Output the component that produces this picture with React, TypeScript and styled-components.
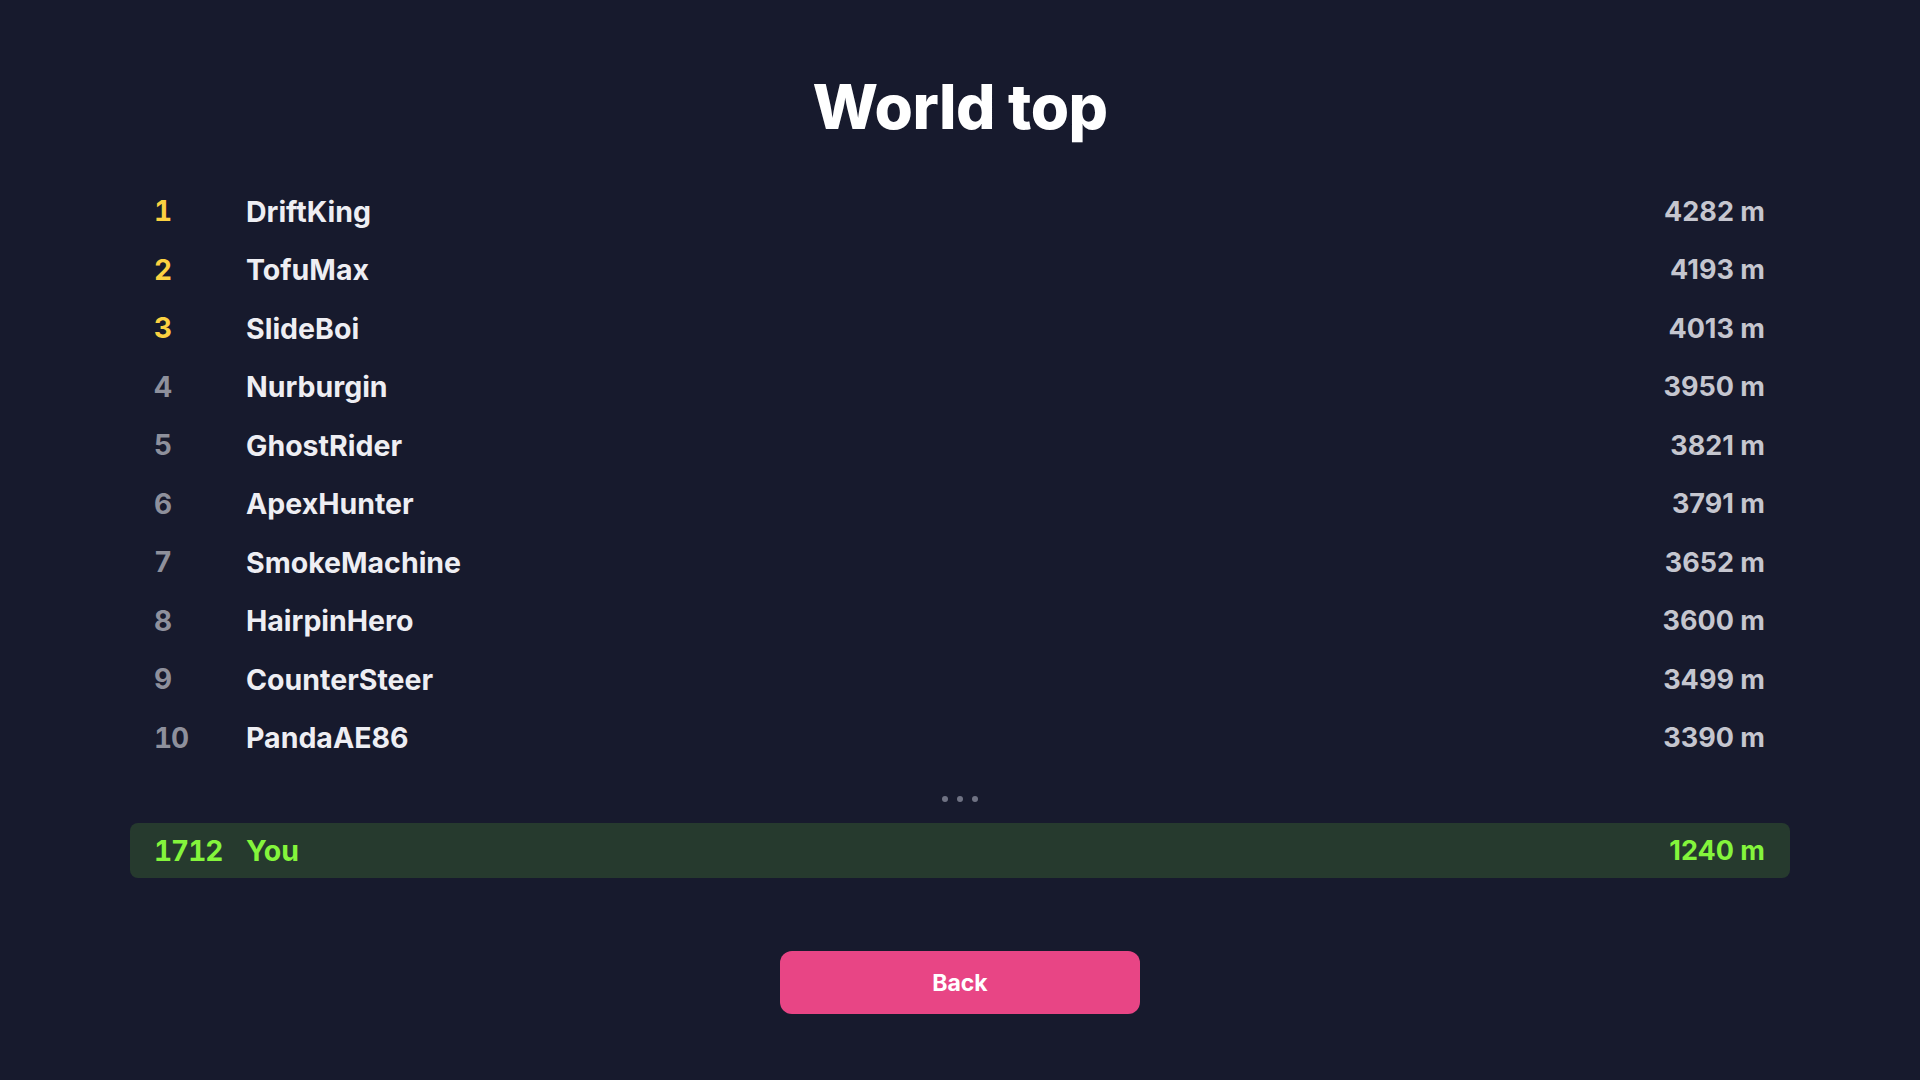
import React from "react";
import styled, { createGlobalStyle } from "styled-components";

const GlobalStyle = createGlobalStyle`
  html, body {
    margin: 0;
    padding: 0;
    background: #171a2d;
  }
  body {
    font-family: Inter, "Noto Sans", "Liberation Sans", sans-serif;
    color: #f2f2f6;
  }
`;

const Page = styled.main`
  width: 1920px;
  height: 1080px;
  box-sizing: border-box;
  padding-top: 75px;
  display: flex;
  flex-direction: column;
  align-items: center;
`;

const Title = styled.h1`
  margin: 0;
  font-size: 62px;
  line-height: 64px;
  font-weight: 800;
  color: #ffffff;
  letter-spacing: -0.5px;
`;

const List = styled.ol`
  list-style: none;
  margin: 43px 0 0;
  padding: 0;
  width: 1660px;
  display: flex;
  flex-direction: column;
`;

const Row = styled.li<{ $you?: boolean }>`
  display: flex;
  align-items: center;
  height: ${(p) => (p.$you ? "55px" : "58.5px")};
  padding: 0 25px 0 24px;
  box-sizing: border-box;
  border-radius: 8px;
  background: ${(p) => (p.$you ? "#263a2e" : "transparent")};
  font-size: 28.5px;
  font-weight: 700;
`;

const Rank = styled.span<{ $tone: "gold" | "plain" | "you" }>`
  width: 92px;
  flex: none;
  font-size: 28px;
  font-variant-numeric: tabular-nums;
  letter-spacing: -1px;
  color: ${(p) =>
    p.$tone === "gold" ? "#fbd141" : p.$tone === "you" ? "#84f53c" : "#8e909c"};
`;

const Name = styled.span<{ $you?: boolean }>`
  flex: 1;
  color: ${(p) => (p.$you ? "#84f53c" : "#eeeef3")};
`;

const Score = styled.span<{ $you?: boolean }>`
  font-size: 27px;
  color: ${(p) => (p.$you ? "#84f53c" : "#c5c6cf")};
`;

const Ellipsis = styled.div`
  display: flex;
  justify-content: center;
  gap: 9px;
  padding: 29px 0 21px;
`;

const Dot = styled.span`
  width: 6px;
  height: 6px;
  border-radius: 50%;
  background: #6f7283;
`;

const BackButton = styled.button`
  margin-top: 73px;
  width: 360px;
  height: 63px;
  border: none;
  border-radius: 12px;
  background: #e84585;
  color: #ffffff;
  font-family: inherit;
  font-size: 23px;
  font-weight: 700;
  cursor: pointer;
`;

const players = [
  { name: "DriftKing", score: 4282 },
  { name: "TofuMax", score: 4193 },
  { name: "SlideBoi", score: 4013 },
  { name: "Nurburgin", score: 3950 },
  { name: "GhostRider", score: 3821 },
  { name: "ApexHunter", score: 3791 },
  { name: "SmokeMachine", score: 3652 },
  { name: "HairpinHero", score: 3600 },
  { name: "CounterSteer", score: 3499 },
  { name: "PandaAE86", score: 3390 },
];

export default function App() {
  return (
    <>
      <GlobalStyle />
      <Page>
        <Title>World top</Title>
        <List>
          {players.map((p, i) => (
            <Row key={p.name}>
              <Rank $tone={i < 3 ? "gold" : "plain"}>{i + 1}</Rank>
              <Name>{p.name}</Name>
              <Score>{p.score} m</Score>
            </Row>
          ))}
          <Ellipsis aria-hidden>
            <Dot />
            <Dot />
            <Dot />
          </Ellipsis>
          <Row $you>
            <Rank $tone="you">1712</Rank>
            <Name $you>You</Name>
            <Score $you>1240 m</Score>
          </Row>
        </List>
        <BackButton>Back</BackButton>
      </Page>
    </>
  );
}
